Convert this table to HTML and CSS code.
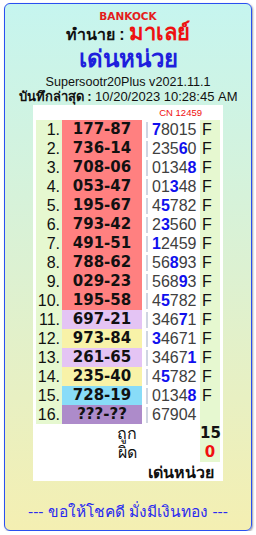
FILE: index.html
```html
<!DOCTYPE html>
<html lang="th">
<head>
<meta charset="utf-8">
<title>เด่นหน่วย</title>
<link rel="stylesheet" href="styles.css">
</head>
<body>
<div class="card">
  <div class="brand">BANKOCK</div>
  <div class="title"><span class="lbl">ทำนาย :</span> <span class="country">มาเลย์</span></div>
  <div class="headline">เด่นหน่วย</div>
  <div class="ver">Supersootr20Plus v2021.11.1</div>
  <div class="saved"><b>บันทึกล่าสุด :</b> 10/20/2023 10:28:45 AM</div>
  <div class="panel">
    <div class="cn">CN 12459</div>
    <div class="grid">
      <div class="no">1.</div><div class="res red">177-87</div><div class="dg"><span class="bar"></span><b>7</b>8015</div><div class="f">F</div>
      <div class="no">2.</div><div class="res red">736-14</div><div class="dg"><span class="bar"></span>235<b>6</b>0</div><div class="f">F</div>
      <div class="no">3.</div><div class="res red">708-06</div><div class="dg"><span class="bar"></span>0134<b>8</b></div><div class="f">F</div>
      <div class="no">4.</div><div class="res red">053-47</div><div class="dg"><span class="bar"></span>01<b>3</b>48</div><div class="f">F</div>
      <div class="no">5.</div><div class="res red">195-67</div><div class="dg"><span class="bar"></span>4<b>5</b>782</div><div class="f">F</div>
      <div class="no">6.</div><div class="res red">793-42</div><div class="dg"><span class="bar"></span>2<b>3</b>560</div><div class="f">F</div>
      <div class="no">7.</div><div class="res red">491-51</div><div class="dg"><span class="bar"></span><b>1</b>2459</div><div class="f">F</div>
      <div class="no">8.</div><div class="res red">788-62</div><div class="dg"><span class="bar"></span>56<b>8</b>93</div><div class="f">F</div>
      <div class="no">9.</div><div class="res red">029-23</div><div class="dg"><span class="bar"></span>568<b>9</b>3</div><div class="f">F</div>
      <div class="no">10.</div><div class="res red">195-58</div><div class="dg"><span class="bar"></span>4<b>5</b>782</div><div class="f">F</div>
      <div class="no">11.</div><div class="res lilac">697-21</div><div class="dg"><span class="bar"></span>346<b>7</b>1</div><div class="f">F</div>
      <div class="no">12.</div><div class="res yellow">973-84</div><div class="dg"><span class="bar"></span><b>3</b>4671</div><div class="f">F</div>
      <div class="no">13.</div><div class="res lilac">261-65</div><div class="dg"><span class="bar"></span>3467<b>1</b></div><div class="f">F</div>
      <div class="no">14.</div><div class="res yellow">235-40</div><div class="dg"><span class="bar"></span>4<b>5</b>782</div><div class="f">F</div>
      <div class="no">15.</div><div class="res sky">728-19</div><div class="dg"><span class="bar"></span>0134<b>8</b></div><div class="f">F</div>
      <div class="no">16.</div><div class="res violet">???-??</div><div class="dg"><span class="bar"></span>67904</div><div class="f"></div>
      <div class="sum-lbl">ถูก</div><div class="sum-gap"></div><div class="f sum-val">15</div>
      <div class="sum-lbl">ผิด</div><div class="sum-gap"></div><div class="f sum-val miss">0</div>
      <div class="sum-foot">เด่นหน่วย</div>
    </div>
  </div>
  <div class="footer">--- ขอให้โชคดี มั่งมีเงินทอง ---</div>
</div>
</body>
</html>
```
FILE: styles.css
```css
html, body {
  margin: 0;
  padding: 0;
  background: #ffffff;
}
body {
  padding: 3px 0 0 4px;
  font-family: "Liberation Sans", Tahoma, sans-serif;
  color: #111;
}
.card {
  box-sizing: border-box;
  width: 248px;
  height: 528px;
  border: 1px solid #2a50f0;
  border-radius: 6px;
  box-shadow: 1px 1px 2px rgba(90, 90, 110, 0.6);
  background: linear-gradient(to bottom, #c6f5ef 0%, #dcf1d2 50%, #f4efb2 100%);
  text-align: center;
  padding-top: 6px;
}
.brand {
  font-family: "DejaVu Sans", sans-serif;
  font-weight: bold;
  font-size: 10.5px;
  line-height: 13px;
  color: #e41c1c;
}
.title {
  line-height: 19px;
  font-weight: bold;
}
.title .lbl {
  font-size: 16px;
  color: #111;
}
.title .country {
  font-size: 22px;
  color: #ee1111;
}
.headline {
  font-size: 24px;
  line-height: 30px;
  font-weight: bold;
  color: #1f1fdd;
}
.ver {
  font-size: 12.6px;
  line-height: 16px;
}
.saved {
  font-size: 13px;
  line-height: 14px;
}
.panel {
  width: 190px;
  margin: 1px auto 0;
  background: #fff;
  padding: 0 3px;
  box-sizing: border-box;
}
.cn {
  text-align: right;
  padding-right: 18px;
  font-size: 9.5px;
  line-height: 15px;
  color: #f01010;
}
.grid {
  display: grid;
  grid-template-columns: 26px 80px 58px 20px;
  grid-auto-rows: 19px;
  font-size: 16px;
  line-height: 19px;
}
.no {
  background: #e6f8d0;
  text-align: right;
  padding-right: 2px;
  color: #111;
}
.res {
  font-family: "DejaVu Sans", sans-serif;
  font-weight: bold;
  font-size: 15px;
  color: #111;
}
.red { background: #ff8080; }
.lilac { background: #e4c4f4; }
.yellow { background: #f8f2a8; }
.sky { background: #88dcf8; }
.violet { background: #ad8bca; }
.dg {
  display: flex;
  align-items: center;
  padding-left: 4px;
  color: #404040;
  text-align: left;
}
.dg b {
  color: #1010ee;
}
.bar {
  width: 2px;
  height: 16px;
  background: #cfd5e2;
  margin-right: 4px;
}
.f {
  background: #e6f8d0;
  text-align: left;
  padding-left: 2px;
  color: #111;
}
.sum-lbl {
  grid-column: 1 / 3;
  text-align: right;
  padding-right: 5px;
  font-size: 16px;
}
.sum-val {
  font-family: "DejaVu Sans", sans-serif;
  font-weight: bold;
  font-size: 15px;
  padding-left: 0;
}
.miss {
  color: #f01010;
  text-align: center;
}
.sum-foot {
  grid-column: 1 / 5;
  text-align: right;
  padding-right: 6px;
  font-weight: bold;
  font-size: 16px;
  line-height: 21px;
}
.footer {
  margin-top: 22px;
  font-size: 15.5px;
  line-height: 18px;
  color: #2b2bf0;
}
```
